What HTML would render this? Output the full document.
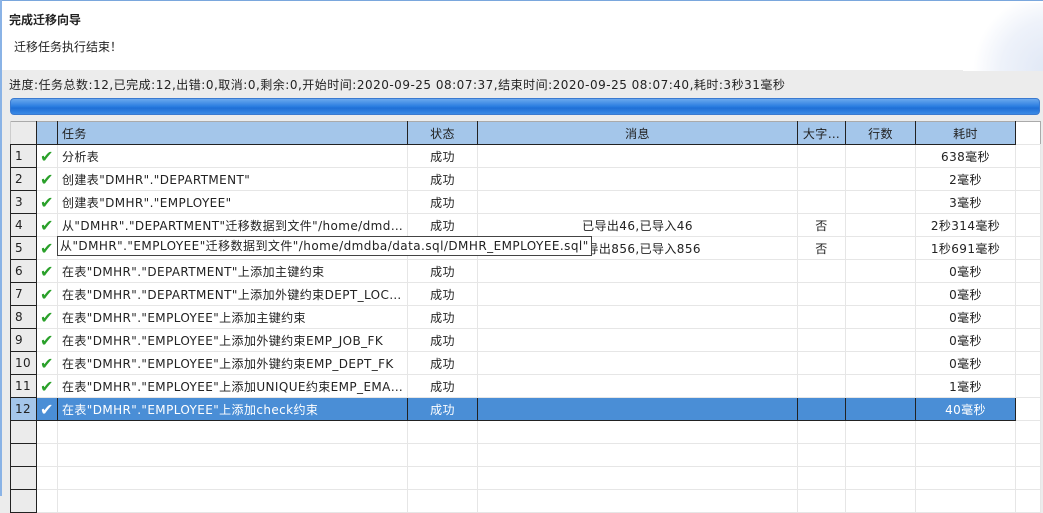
<html><head><style>
body{margin:0;width:1043px;height:496px;overflow:hidden;background:#ececec;font-family:"DejaVu Sans","Noto Sans CJK SC",sans-serif;font-size:12px;color:#222;position:relative}
.top{position:absolute;left:0;top:0;width:1043px;height:70px;background:#fff;border-top:1px solid #7aa7dd;box-sizing:border-box}
.lb{position:absolute;left:0;top:0;width:2px;height:496px;background:#8ab3e6}
.t1{position:absolute;left:9px;top:10px;font-weight:bold;font-size:12px}
.t2{position:absolute;left:14px;top:37px;font-size:12px}
.deco{position:absolute;right:0;top:2px;width:80px;height:68px;background:radial-gradient(circle at 110% 100%,#dfe7f5 0,#eef2fa 45%,#fff 70%)}
.prog{position:absolute;left:9px;top:76px;font-size:12px;letter-spacing:0.5px}
.bar{position:absolute;left:10px;top:98px;width:1030px;height:17px;border:1px solid #3a7ad0;border-radius:4px;box-sizing:border-box;background:linear-gradient(#6aa8ee,#2a7de0 50%,#1f6fd6 60%,#3a8ae6)}
table{position:absolute;left:10px;top:121px;width:1030px;border-collapse:collapse;table-layout:fixed;background:#fff;border:1px solid #aaa;letter-spacing:0.4px}
td{height:23px;padding:0 4px;border:1px solid #e6e6e6;white-space:nowrap;overflow:hidden;text-overflow:ellipsis;font-size:12px}
tr.h td{background:#a4c6ea;border:1px solid #222;border-top:none;text-align:center}
tr.h td.l{text-align:left}
td.n{background:#ebebeb;border:1px solid #222;border-top:none;padding-left:4px}
tr.h td.n{background:#ebebeb;border-color:#ccc #222 #222 #ccc}
td.c{text-align:center}
td.e{background:#fff;border-color:#e6e6e6}
tr.h td.e{background:#fff;border:none}
tr.s td{background:#4a8ed6;color:#fff;border-top:1px solid #222;border-bottom:1px solid #222;border-color:#222}
tr.s td.n{background:#a4c6ea;color:#222}
tr.s td.e{background:#fff;border-color:#e6e6e6}
.ck{color:#2aa02a;font-weight:bold;font-size:16px;padding:0 0 0 3px}
.tip{position:absolute;left:57px;top:236px;height:20px;line-height:18px;padding:0 2px;border:1px solid #444;background:#fff;font-size:12px;box-sizing:border-box;white-space:nowrap;letter-spacing:0.45px}
</style></head><body>
<div class="top"><div class="t1">完成迁移向导</div><div class="t2">迁移任务执行结束！</div><div class="deco"></div></div>
<div class="lb"></div>
<div class="prog">进度:任务总数:12,已完成:12,出错:0,取消:0,剩余:0,开始时间:2020-09-25 08:07:37,结束时间:2020-09-25 08:07:40,耗时:3秒31毫秒</div>
<div class="bar"></div>
<table>
<colgroup><col style="width:26px"><col style="width:21px"><col style="width:350px"><col style="width:70px"><col style="width:320px"><col style="width:48px"><col style="width:70px"><col style="width:100px"><col style="width:25px"></colgroup>
<tr class="h"><td class="n"></td><td></td><td class="l">任务</td><td>状态</td><td>消息</td><td>大字…</td><td>行数</td><td>耗时</td><td class="e"></td></tr>
<tr><td class="n">1</td><td class="ck">✔</td><td>分析表</td><td class="c">成功</td><td></td><td></td><td></td><td class="c">638毫秒</td><td class="e"></td></tr>
<tr><td class="n">2</td><td class="ck">✔</td><td>创建表"DMHR"."DEPARTMENT"</td><td class="c">成功</td><td></td><td></td><td></td><td class="c">2毫秒</td><td class="e"></td></tr>
<tr><td class="n">3</td><td class="ck">✔</td><td>创建表"DMHR"."EMPLOYEE"</td><td class="c">成功</td><td></td><td></td><td></td><td class="c">3毫秒</td><td class="e"></td></tr>
<tr><td class="n">4</td><td class="ck">✔</td><td>从"DMHR"."DEPARTMENT"迁移数据到文件"/home/dmdba/data.sql/DMHR_DEPARTMENT.sql"</td><td class="c">成功</td><td class="c">已导出46,已导入46</td><td class="c">否</td><td></td><td class="c">2秒314毫秒</td><td class="e"></td></tr>
<tr><td class="n">5</td><td class="ck">✔</td><td></td><td class="c">成功</td><td class="c">已导出856,已导入856</td><td class="c">否</td><td></td><td class="c">1秒691毫秒</td><td class="e"></td></tr>
<tr><td class="n">6</td><td class="ck">✔</td><td>在表"DMHR"."DEPARTMENT"上添加主键约束</td><td class="c">成功</td><td></td><td></td><td></td><td class="c">0毫秒</td><td class="e"></td></tr>
<tr><td class="n">7</td><td class="ck">✔</td><td>在表"DMHR"."DEPARTMENT"上添加外键约束DEPT_LOCATION_FK</td><td class="c">成功</td><td></td><td></td><td></td><td class="c">0毫秒</td><td class="e"></td></tr>
<tr><td class="n">8</td><td class="ck">✔</td><td>在表"DMHR"."EMPLOYEE"上添加主键约束</td><td class="c">成功</td><td></td><td></td><td></td><td class="c">0毫秒</td><td class="e"></td></tr>
<tr><td class="n">9</td><td class="ck">✔</td><td>在表"DMHR"."EMPLOYEE"上添加外键约束EMP_JOB_FK</td><td class="c">成功</td><td></td><td></td><td></td><td class="c">0毫秒</td><td class="e"></td></tr>
<tr><td class="n">10</td><td class="ck">✔</td><td>在表"DMHR"."EMPLOYEE"上添加外键约束EMP_DEPT_FK</td><td class="c">成功</td><td></td><td></td><td></td><td class="c">0毫秒</td><td class="e"></td></tr>
<tr><td class="n">11</td><td class="ck">✔</td><td>在表"DMHR"."EMPLOYEE"上添加UNIQUE约束EMP_EMAIL_UNIQUE</td><td class="c">成功</td><td></td><td></td><td></td><td class="c">1毫秒</td><td class="e"></td></tr>
<tr class="s"><td class="n">12</td><td class="ck">✔</td><td>在表"DMHR"."EMPLOYEE"上添加check约束</td><td class="c">成功</td><td></td><td></td><td></td><td class="c">40毫秒</td><td class="e"></td></tr>
<tr><td class="n"></td><td></td><td></td><td></td><td></td><td></td><td></td><td></td><td class="e"></td></tr>
<tr><td class="n"></td><td></td><td></td><td></td><td></td><td></td><td></td><td></td><td class="e"></td></tr>
<tr><td class="n"></td><td></td><td></td><td></td><td></td><td></td><td></td><td></td><td class="e"></td></tr>
<tr><td class="n"></td><td></td><td></td><td></td><td></td><td></td><td></td><td></td><td class="e"></td></tr>
</table>
<div class="tip">从"DMHR"."EMPLOYEE"迁移数据到文件"/home/dmdba/data.sql/DMHR_EMPLOYEE.sql"</div>
</body></html>
